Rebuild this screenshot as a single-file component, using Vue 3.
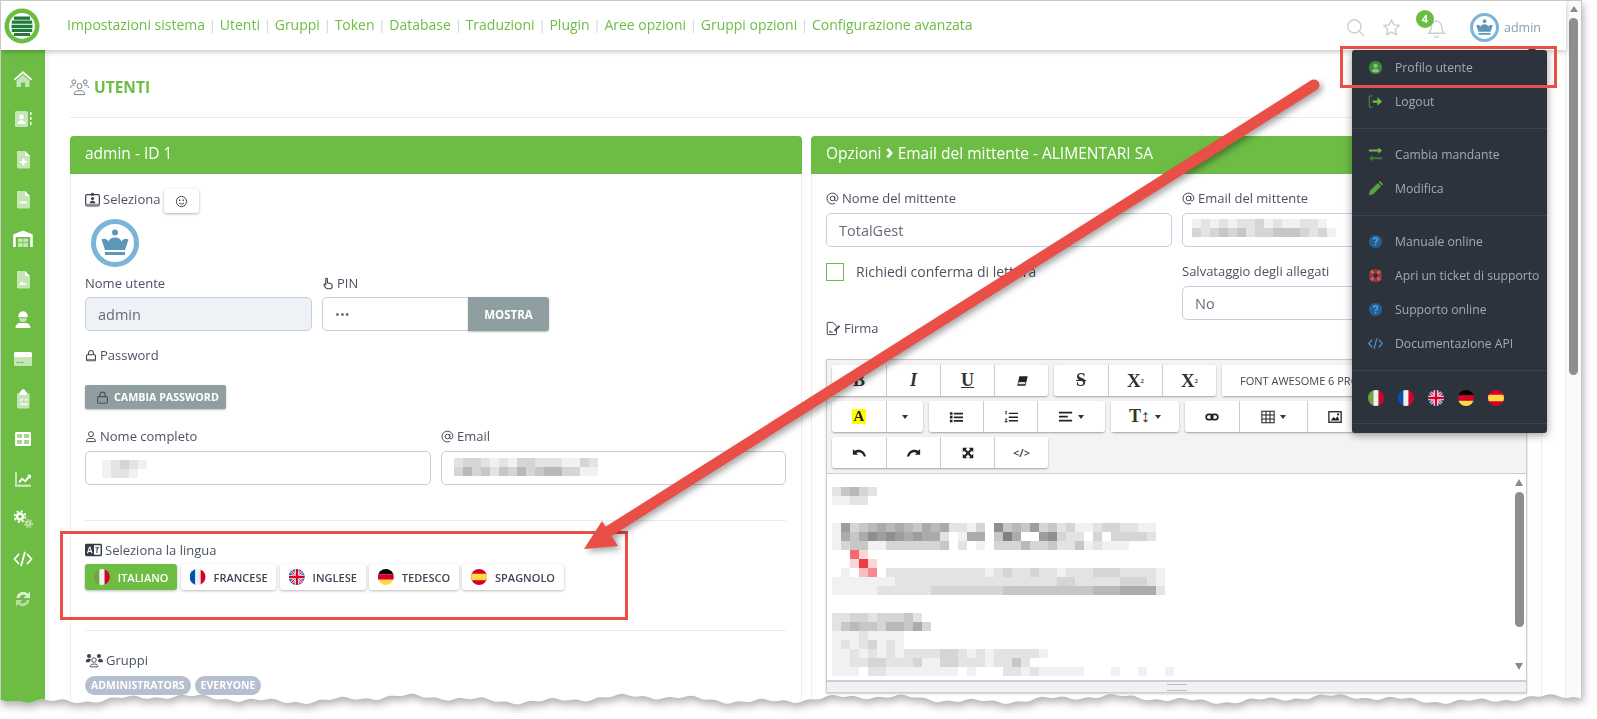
<script setup>
import { computed } from 'vue'

const navLinks = ['Impostazioni sistema', 'Utenti', 'Gruppi', 'Token', 'Database', 'Traduzioni', 'Plugin', 'Aree opzioni', 'Gruppi opzioni', 'Configurazione avanzata']
const sideIcons = ['s-home', 's-id', 's-plus', 's-minus', 's-ware', 's-fchart', 's-work', 's-card', 's-clip', 's-table', 's-chart', 's-cogs', 's-code', 's-sync']
const langs = [
  { name: 'ITALIANO', flag: 'f-it', active: true },
  { name: 'FRANCESE', flag: 'f-fr' },
  { name: 'INGLESE', flag: 'f-uk' },
  { name: 'TEDESCO', flag: 'f-de' },
  { name: 'SPAGNOLO', flag: 'f-es' }
]
const flags = ['f-it', 'f-fr', 'f-uk', 'f-de', 'f-es']

const special = { r: '#f46a70', s: '#fbd5d8', t: '#ee3b43', u: '#fbbcbe', v: '#f88a8f' }
function cells(str) {
  return [...str].map((c) => {
    if (c === '.') return 'transparent'
    if (special[c]) return special[c]
    const g = 255 - parseInt(c, 16) * 14
    return `rgb(${g},${g},${g})`
  })
}
const mosaic = (rows) => rows.map(cells)

const mNome = mosaic(['012321', '012210'])
const mMail = mosaic(['2332121332221132', '3534243534553311'])
const mSender = mosaic(['1212122312112210', '3234342334443231'])
const eGroups = [
  { gap: 14, rows: mosaic(['24532', '11220']) },
  { gap: 18, rows: mosaic([
    '17345656546562213.8454734231123322110',
    '1646878767662.166.4960.78322.3.33332.',
    '1344113333334.2.1.33353342241211100.',
    '..rs',
    '..sts',
    '.1.uv.2222222222212322322122233322221',
    '1111111222222222222222222332222233321',
    '1111122222233333333444444444455566662'
  ]) },
  { gap: 18, rows: mosaic([
    '22332333420',
    '24544355463',
    '111211110',
    '121231210',
    '112121212222332121222221',
    '1122332223113322212242',
    '111.2211111111.1...221211111...1..1..1..'
  ]) }
]

const tornClip = computed(() => {
  const pts = ['0 0', '100% 0', '100% 698px']
  for (let x = 1582; x > 0; x -= 4) {
    const y = 699 + 2.6 * Math.sin(x / 37) + 1.8 * Math.sin(x / 11.3) + 1.1 * Math.sin(x / 3.7)
    pts.push(`${x}px ${y.toFixed(1)}px`)
  }
  pts.push('0 700px')
  return `polygon(${pts.join(',')})`
})
</script>

<template>
  <div class="shot">
    <svg class="defs" aria-hidden="true">
      <symbol id="s-home" viewBox="0 0 20 20"><path fill="#fff" d="M10 2 .8 10.2 2 11.6l8-7 8 7 1.2-1.4z"/><path fill="#fff" opacity=".6" d="M3.5 11.5 10 5.8l6.5 5.7V18H12v-4.5H8V18H3.5z"/></symbol>
      <symbol id="s-id" viewBox="0 0 20 20"><rect x="2" y="2" width="13" height="16" rx="1.5" fill="#fff" opacity=".6"/><circle cx="8.5" cy="8" r="2.4" fill="#fff"/><path fill="#fff" d="M4.500 15c0-2.500 2-3.800 4-3.800s4 1.300 4 3.800z"/><path fill="#fff" d="M17 3h1.500v3H17zm0 5h1.500v3H17zm0 5h1.500v3H17z"/></symbol>
      <symbol id="s-plus" viewBox="0 0 20 20"><path fill="#fff" opacity=".6" d="M4 2h8l5 5v11a1.500 1.500 0 0 1-1.500 1.500h-10A1.500 1.500 0 0 1 4 18z"/><path fill="#fff" d="m12 2 5 5h-5zM9.500 9.500h2V12H14v2h-2.500v2.500h-2V14H7v-2h2.500z"/></symbol>
      <symbol id="s-minus" viewBox="0 0 20 20"><path fill="#fff" opacity=".6" d="M4 2h8l5 5v11a1.500 1.500 0 0 1-1.500 1.500h-10A1.500 1.500 0 0 1 4 18z"/><path fill="#fff" d="m12 2 5 5h-5zM7 12.500h7v2H7z"/></symbol>
      <symbol id="s-ware" viewBox="0 0 20 20"><path fill="#fff" d="M10 1.500 19.800 5.500v12.500h-2.600V8H2.800v10H.2V5.500z"/><path fill="#fff" opacity=".6" d="M5 9.500h4.700v3.800H5zm5.300 0H15v3.800h-4.700zM5 14h4.700v4H5zm5.300 0H15v4h-4.700z"/></symbol>
      <symbol id="s-fchart" viewBox="0 0 20 20"><path fill="#fff" opacity=".6" d="M4 2h8l5 5v11a1.500 1.500 0 0 1-1.500 1.500h-10A1.500 1.500 0 0 1 4 18z"/><path fill="#fff" d="m12 2 5 5h-5zM6 16l2.500-4 2 2.500 1-1 2.500 2.500z"/></symbol>
      <symbol id="s-work" viewBox="0 0 20 20"><path fill="#fff" d="M5.300 7a4.700 4.700 0 0 1 9.400 0v1.200H5.300zM2.500 19c0-3.500 2.500-5 4.500-5h6c2 0 4.500 1.500 4.500 5z"/><path fill="#fff" opacity=".6" d="M6.200 9.200h7.600a3.800 3.800 0 0 1-7.600 0z"/></symbol>
      <symbol id="s-card" viewBox="0 0 20 20"><path fill="#fff" d="M1 4.500A1.500 1.500 0 0 1 2.500 3h15A1.500 1.500 0 0 1 19 4.500V8H1z"/><path fill="#fff" opacity=".6" d="M1 8h18v7.500a1.500 1.500 0 0 1-1.500 1.500h-15A1.500 1.500 0 0 1 1 15.500z"/><path fill="#6dbd45" d="M3.500 13h3v1h-3zm4 0h3v1h-3z"/></symbol>
      <symbol id="s-clip" viewBox="0 0 20 20"><rect x="4" y="4" width="12.500" height="15.500" rx="1.500" fill="#fff" opacity=".6"/><path fill="#fff" d="M8 2.500a2.200 2.200 0 0 1 4.400 0h1.300v3.500H6.700V2.500zM7 10l1 1 1.800-1.800.7.700L8 12.400 6.300 10.700zm5 .2h3v1.200h-3zM7 14.500h8v1.200H7z"/></symbol>
      <symbol id="s-table" viewBox="0 0 20 20"><rect x="2" y="3" width="16" height="14" rx="1.500" fill="#fff"/><path fill="#6dbd45" d="M4 5h5v4H4zm7 0h5v4h-5zM4 11h5v4H4zm7 0h5v4h-5z" opacity=".6"/></symbol>
      <symbol id="s-chart" viewBox="0 0 20 20"><path fill="#fff" opacity=".6" d="M2 3h2v12.500h14V18H2z"/><path fill="#fff" d="M5.500 12.500 9 8.500l3 2.500 3.300-4-1.500-1.200H18V10l-1.300-1.500-4.300 5-3-2.500-2.800 3.200z"/></symbol>
      <symbol id="s-cogs" viewBox="0 0 20 20"><g fill="none" stroke="#fff"><circle cx="7" cy="7.500" r="3" stroke-width="2.600"/><circle cx="7" cy="7.500" r="5.400" stroke-width="1.800" stroke-dasharray="2.100 2.150"/></g><g fill="none" stroke="#fff" opacity=".55"><circle cx="15.500" cy="14.500" r="2" stroke-width="2"/><circle cx="15.500" cy="14.500" r="3.800" stroke-width="1.500" stroke-dasharray="1.600 1.600"/></g></symbol>
      <symbol id="s-code" viewBox="0 0 20 20"><path fill="none" stroke="#fff" stroke-width="1.800" stroke-linecap="round" stroke-linejoin="round" d="M5.500 5.500 1.500 10l4 4.500M14.500 5.500l4 4.500-4 4.500M11.800 3.500 8.200 16.500"/></symbol>
      <symbol id="s-sync" viewBox="0 0 20 20"><path fill="#fff" opacity=".75" d="M3.500 9A6.800 6.800 0 0 1 15 4.700L17 2.500V9h-6.500l2.400-2.200A4 4 0 0 0 6.300 9z"/><path fill="#fff" opacity=".5" d="M16.500 11A6.800 6.800 0 0 1 5 15.300L3 17.500V11h6.500l-2.400 2.200a4 4 0 0 0 6.600-2.200z"/></symbol>

      <symbol id="crown" viewBox="0 0 48 48"><circle cx="24" cy="24" r="21.500" fill="#fff" stroke="#7ab4d9" stroke-width="5"/><circle cx="24" cy="13.500" r="3" fill="#5d97b8"/><path fill="#5d97b8" d="M10.500 20.500c3-1.500 5.500-.5 7 2 1-2.500 3-4 6.500-4s5.500 1.500 6.500 4c1.500-2.500 4-3.500 7-2L34 31H14z"/><rect x="14" y="33" width="20" height="3" fill="#5d97b8"/></symbol>
      <symbol id="people" viewBox="0 0 20 18" fill="none" stroke="currentColor" stroke-width="1"><circle cx="10" cy="8" r="2.700"/><path d="M4.500 17v-.800c0-2 2-3.200 3.500-3.200h4c1.500 0 3.500 1.200 3.500 3.200v.800z"/><circle cx="4" cy="3.500" r="2"/><circle cx="16" cy="3.500" r="2"/><path d="M.6 10c0-2 1.400-3 2.400-3h2M19.400 10c0-2-1.400-3-2.400-3h-2"/></symbol>
      <symbol id="badge" viewBox="0 0 16 16"><rect x=".7" y="2.700" width="14.600" height="12" rx="1.500" fill="none" stroke="currentColor" stroke-width="1.300"/><path fill="#8d8d8d" d="M.7 12.500h14.600v2.200H.7z"/><rect x="6.500" y="1" width="3" height="3" fill="currentColor"/><circle cx="8" cy="7" r="1.700" fill="currentColor"/><path fill="currentColor" d="M5 12c0-2 1.400-2.800 3-2.800s3 .8 3 2.800z"/></symbol>
      <symbol id="smile" viewBox="0 0 16 16" fill="none" stroke="currentColor" stroke-width="1.200"><circle cx="8" cy="8" r="6.300"/><path d="M5 9.800c1.500 1.700 4.500 1.700 6 0"/><path fill="currentColor" stroke="none" d="M5 5.500h1.600v2H5zm4.400 0H11v2H9.400z"/></symbol>
      <symbol id="hand" viewBox="0 0 16 16"><path fill="none" stroke="currentColor" stroke-width="1.500" d="M5 8V2.200a1.100 1.100 0 0 1 2.200 0V7l4 .9c1.500.4 2.300 1.400 2.300 2.800v1.300a3 3 0 0 1-3 3H7.500c-1 0-1.800-.5-2.400-1.300L2.700 10.700c-.8-1.300.9-2.600 2.300-1.200z"/><path fill="#e0a040" d="M5.400 2h1.400v1.800H5.400z"/></symbol>
      <symbol id="lock" viewBox="0 0 16 16" fill="none" stroke="currentColor" stroke-width="1.400"><rect x="2" y="7" width="12" height="8" rx="1.300"/><path d="M4.800 7V4.500a3.200 3.200 0 0 1 6.400 0V7"/><path fill="#8d8d8d" stroke="none" d="M2.500 12.500h11v2h-11z"/></symbol>
      <symbol id="user" viewBox="0 0 16 16" fill="none" stroke="currentColor" stroke-width="1.300"><circle cx="8" cy="4.800" r="3.300"/><path d="M2.200 14.800v-1c0-2 1.600-3.300 3.300-3.300h5c1.700 0 3.300 1.300 3.300 3.300v1z"/></symbol>
      <symbol id="at" viewBox="0 0 16 16" fill="none" stroke="currentColor" stroke-width="1.200"><circle cx="8" cy="8" r="2.800"/><path d="M10.800 5.200V9.500c0 2.200 3.800 2.200 3.800-1.500A6.700 6.700 0 1 0 11 14"/></symbol>
      <symbol id="lang" viewBox="0 0 18 14"><rect width="18" height="13" y=".5" rx="1.500" fill="#333b47"/><rect x="9.500" y="2" width="7" height="10" fill="#fff"/><path fill="#fff" d="m2 10.500 2.300-7h1.400l2.300 7H6.700l-.4-1.400H3.700l-.4 1.400zm2-2.600h2L5 4.900z"/><path fill="#333b47" d="M11 4h4v1.100h-1.500l-.5 5h-1.100l.5-5H11z"/></symbol>
      <symbol id="groups" viewBox="0 0 20 16"><path fill="currentColor" d="M1 9c0-2 1.200-3 3-3s2.400.7 2.800 1.500C5.700 8 5 9 5 10H1zM15 7.500c.4-.8 1-1.500 2-1.500 1.800 0 3 1 3 3v1h-5c0-1-.3-2-1-2.500z"/><circle cx="4.500" cy="3" r="2.300" fill="currentColor"/><circle cx="15.500" cy="3" r="2.300" fill="currentColor"/><circle cx="10" cy="7.500" r="2.500" fill="none" stroke="currentColor"/><path fill="none" stroke="currentColor" d="M5.800 15v-.5c0-1.500 1.500-2.500 3-2.500h2.400c1.500 0 3 1 3 2.500v.5z"/></symbol>
      <symbol id="sig" viewBox="0 0 18 16"><path fill="none" stroke="currentColor" stroke-width="1.200" d="M12.500 10v4.300a1 1 0 0 1-1 1h-9a1 1 0 0 1-1-1V1.700a1 1 0 0 1 1-1H8l4.500 4v1"/><path fill="currentColor" d="M10 9.500 15.500 4l1.500 1.500L11.500 11H10zM3.500 12.500c1-2 2-3 2.500-1.500s1 1.500 2 .5l.3 1c-1.300 1.200-2.500 1-3-.5-.4.500-.7 1-1 1.300z"/></symbol>

      <symbol id="search" viewBox="0 0 20 20" fill="none" stroke="currentColor" stroke-width="1.500"><circle cx="8.800" cy="8.800" r="7"/><path d="m14 14 5 5"/></symbol>
      <symbol id="star" viewBox="0 0 20 20" fill="none" stroke="currentColor" stroke-width="1.500" stroke-linejoin="round"><path d="m10 1.800 2.500 5.400 5.900.7-4.400 4 1.200 5.800L10 14.800l-5.200 2.900L6 11.900l-4.400-4 5.900-.7z"/></symbol>
      <symbol id="bell" viewBox="0 0 20 20" fill="none" stroke="currentColor" stroke-width="1.500"><path d="M10 1v1.500a5.500 5.500 0 0 0-5.500 5.500c0 4-1 5.500-2.500 7h16c-1.500-1.500-2.500-3-2.500-7A5.500 5.500 0 0 0 10 2.500M8 17.500a2 2 0 0 0 4 0"/></symbol>

      <symbol id="d-user" viewBox="0 0 16 16"><circle cx="8" cy="8" r="7" fill="#3f8a3a"/><circle cx="8" cy="6.200" r="2.300" fill="#8fc478"/><path fill="#8fc478" d="M4 12c.5-2 2-2.800 4-2.800s3.500.8 4 2.800c-2 1.500-6 1.500-8 0z"/></symbol>
      <symbol id="d-out" viewBox="0 0 16 16"><path fill="none" stroke="#3c7d38" stroke-width="1.500" d="M5 2H2.500A1 1 0 0 0 1.500 3v10a1 1 0 0 0 1 1H5"/><path fill="#6dbd45" d="M5 6.800h5V3.500L15 8l-5 4.500V9.200H5z"/></symbol>
      <symbol id="d-swap" viewBox="0 0 16 16"><path fill="#6dbd45" d="M1 3.800h10V1.200L15 5l-4 3.800V6.300H1z" transform="translate(0 -.5) scale(1 .85)"/><path fill="#3c7d38" d="M15 10.300H5V7.700L1 11.500l4 3.800v-2.500h10z" transform="translate(0 1.800) scale(1 .88)"/></symbol>
      <symbol id="d-pen" viewBox="0 0 16 16"><path fill="#57a33a" d="M.8 15.200 2 10.500 10.500 2l3.500 3.500L5.500 14z"/><path fill="#6dbd45" d="m11.500 1 1-1 3.500 3.500-1 1z"/></symbol>
      <symbol id="d-help" viewBox="0 0 16 16"><circle cx="8" cy="8" r="7" fill="#235f90"/><path fill="none" stroke="#5ba2da" stroke-width="1.500" d="M5.800 6.200c0-3 4.400-3 4.400 0 0 1.800-2.200 1.600-2.200 3.400"/><rect x="7.200" y="10.600" width="1.600" height="1.600" fill="#5ba2da"/></symbol>
      <symbol id="d-ring" viewBox="0 0 16 16"><circle cx="8" cy="8" r="7" fill="#8f3a3a"/><path stroke="#d65a52" stroke-width="3" d="m3 3 3 3m7-3-3 3m-7 7 3-3m7 3-3-3"/><circle cx="8" cy="8" r="2.500" fill="#2d333d"/></symbol>
      <symbol id="d-code" viewBox="0 0 18 16"><path fill="none" stroke="#4a8bc4" stroke-width="1.600" d="M5 3.500.9 8 5 12.500M13 3.500 17.100 8 13 12.500M10.700 1.500 7.300 14.500"/></symbol>

      <symbol id="f-it" viewBox="0 0 24 24"><path fill="#6da544" d="M0 0h8v24H0z"/><path fill="#f0f0f0" d="M8 0h8v24H8z"/><path fill="#d80027" d="M16 0h8v24h-8z"/></symbol>
      <symbol id="f-fr" viewBox="0 0 24 24"><path fill="#0052b4" d="M0 0h8v24H0z"/><path fill="#f0f0f0" d="M8 0h8v24H8z"/><path fill="#d80027" d="M16 0h8v24h-8z"/></symbol>
      <symbol id="f-uk" viewBox="0 0 24 24"><path fill="#0052b4" d="M0 0h24v24H0z"/><path stroke="#f0f0f0" stroke-width="4.500" d="m0 0 24 24M24 0 0 24"/><path stroke="#d80027" stroke-width="1.600" d="m0 0 24 24M24 0 0 24"/><path stroke="#f0f0f0" stroke-width="7" d="M12 0v24M0 12h24"/><path stroke="#d80027" stroke-width="3.500" d="M12 0v24M0 12h24"/></symbol>
      <symbol id="f-de" viewBox="0 0 24 24"><path fill="#000" d="M0 0h24v8H0z"/><path fill="#d80027" d="M0 8h24v8H0z"/><path fill="#ffda44" d="M0 16h24v8H0z"/></symbol>
      <symbol id="f-es" viewBox="0 0 24 24"><path fill="#d80027" d="M0 0h24v24H0z"/><path fill="#ffda44" d="M0 7h24v10H0z"/></symbol>

      <symbol id="t-eraser" viewBox="0 0 16 16"><path fill="#222" d="M5 2.500h9.500L12 13.500H2.500z"/><path fill="#fff" d="M4.300 9h7.800l-.6 2.800H3.600z" opacity=".85"/></symbol>
      <symbol id="t-ul" viewBox="0 0 16 16"><path fill="#222" d="M1 2.500h3v3H1zm0 4.200h3v3H1zm0 4.300h3v3H1zM5.500 3H16v2H5.500zm0 4.300H16v2H5.500zm0 4.200H16v2H5.500z"/></symbol>
      <symbol id="t-ol" viewBox="0 0 16 16"><path fill="#222" d="M5.500 3H16v1.700H5.500zm0 4.300H16V9H5.500zm0 4.200H16v1.700H5.500zM1.500 1H3v4H1.800V2.200h-.5zM.8 10.500C.9 9.400 3.700 9.100 3.800 10.700c0 1-1.300 1.300-1.600 2h1.700V14H.7c0-1.800 2-2.300 2-3.100 0-.5-.8-.4-.9.100z"/></symbol>
      <symbol id="t-align" viewBox="0 0 16 16"><path fill="#222" d="M0 2h15v2H0zm0 4.500h10v2H0zM0 11h15v2H0z"/></symbol>
      <symbol id="t-link" viewBox="0 0 18 16" fill="none" stroke="#222" stroke-width="2.200"><rect x="1.500" y="4.500" width="8.500" height="7" rx="3.500"/><rect x="8" y="4.500" width="8.500" height="7" rx="3.500"/></symbol>
      <symbol id="t-table" viewBox="0 0 16 16" fill="none" stroke="#222" stroke-width="1.200"><path d="M1 1.500h14v13H1zM1 5.800h14M1 10.200h14M5.700 1.500v13M10.300 1.500v13"/></symbol>
      <symbol id="t-image" viewBox="0 0 16 16"><rect x="1" y="2" width="14" height="12" fill="none" stroke="#222" stroke-width="1.500"/><path fill="#222" d="m3 12 3.500-4 2 2 2.500-3 2 5z"/><circle cx="11.500" cy="5" r="1.200" fill="#222"/></symbol>
      <symbol id="t-undo" viewBox="0 0 16 16"><path fill="#222" d="M1 3.500v6.500h6L4.900 8c3.500-1.800 7-.5 8.600 4H16C14.800 5.500 8.500 2.500 3 5.500z"/></symbol>
      <symbol id="t-redo" viewBox="0 0 16 16"><path fill="#222" d="M15 3.500v6.500H9l2.100-2C7.600 6.200 4.100 7.500 2.500 12H0C1.200 5.500 7.500 2.500 13 5.500z"/></symbol>
      <symbol id="t-full" viewBox="0 0 16 16"><path fill="#222" d="M1 1h6L5 3l3 3 3-3-2-2h6v6l-2-2-3 3 3 3 2-2v6H9l2-2-3-3-3 3 2 2H1V9l2 2 3-3-3-3-2 2z"/></symbol>
    </svg>

    <div class="frame" :style="{ clipPath: tornClip }">
      <div class="app">
        <header class="topbar">
          <div class="logo">
            <svg width="36" height="36" viewBox="0 0 36 36">
              <circle cx="18" cy="18" r="15.200" fill="#fff" stroke="#6dbd45" stroke-width="4.600"/>
              <path fill="#227a3a" d="M10 8.500h16v3.200H10zM7.800 12.600h20.400v3.200H7.800zM7.500 16.700h21v3.200h-21zM7.800 20.800h20.400V24H7.800zM10 24.900h16v3H10z"/>
            </svg>
          </div>
          <nav class="nav">
            <template v-for="(l, i) in navLinks" :key="l">
              <span v-if="i" class="sep">|</span>
              <a class="navlink">{{ l }}</a>
            </template>
          </nav>
          <div class="tools">
            <svg class="tool tool-search"><use href="#search"/></svg>
            <svg class="tool tool-star"><use href="#star"/></svg>
            <div class="bellwrap">
              <svg class="tool"><use href="#bell"/></svg>
              <span class="count">4</span>
            </div>
            <svg class="topavatar"><use href="#crown"/></svg>
            <span class="me">admin</span>
          </div>
        </header>

        <div class="body">
          <aside class="side">
            <div v-for="s in sideIcons" :key="s" class="sideitem">
              <svg class="sideicon"><use :href="'#' + s"/></svg>
            </div>
          </aside>

          <main class="main">
            <div class="title">
              <svg class="titleicon"><use href="#people"/></svg>
              <h1>UTENTI</h1>
            </div>
            <hr class="pagehr" />

            <div class="cards">
              <section class="card">
                <div class="cardhead">admin - ID 1</div>
                <div class="cardbody left">
                  <div class="selrow">
                    <span class="lbl sellbl"><svg class="ic ic-lg"><use href="#badge"/></svg>Seleziona</span>
                    <button class="smilebtn"><svg class="ic"><use href="#smile"/></svg></button>
                  </div>
                  <svg class="bigavatar"><use href="#crown"/></svg>
                  <div class="tworow userrow">
                    <div class="fld-user">
                      <span class="lbl">Nome utente</span>
                      <div class="input readonly">admin</div>
                    </div>
                    <div class="fld-pin">
                      <span class="lbl"><svg class="ic ic-sm"><use href="#hand"/></svg>PIN</span>
                      <div class="pinrow">
                        <div class="input pin">•••</div>
                        <button class="graybtn mostra">MOSTRA</button>
                      </div>
                    </div>
                  </div>
                  <span class="lbl pw"><svg class="ic ic-sm"><use href="#lock"/></svg>Password</span>
                  <button class="graybtn cambia"><svg class="ic ic-dark"><use href="#lock"/></svg>CAMBIA PASSWORD</button>
                  <div class="namegrid">
                    <div>
                      <span class="lbl"><svg class="ic ic-sm"><use href="#user"/></svg>Nome completo</span>
                      <div class="input blurinput">
                        <div class="mos"><div v-for="(r, i) in mNome" :key="i" class="mrow"><i v-for="(c, j) in r" :key="j" :style="{ background: c }"></i></div></div>
                      </div>
                    </div>
                    <div>
                      <span class="lbl"><svg class="ic"><use href="#at"/></svg>Email</span>
                      <div class="input blurinput">
                        <div class="mos"><div v-for="(r, i) in mMail" :key="i" class="mrow"><i v-for="(c, j) in r" :key="j" :style="{ background: c }"></i></div></div>
                      </div>
                    </div>
                  </div>
                  <hr class="cardhr hr1" />
                  <span class="lbl"><svg class="ic ic-lang"><use href="#lang"/></svg>Seleziona la lingua</span>
                  <div class="langs">
                    <button v-for="l in langs" :key="l.name" class="langbtn" :class="{ active: l.active }">
                      <svg class="flag16"><use :href="'#' + l.flag"/></svg>{{ l.name }}
                    </button>
                  </div>
                  <hr class="cardhr hr2" />
                  <span class="lbl"><svg class="ic ic-groups"><use href="#groups"/></svg>Gruppi</span>
                  <div class="badges"><span class="badge">ADMINISTRATORS</span><span class="badge">EVERYONE</span></div>
                </div>
              </section>

              <section class="card">
                <div class="cardhead">Opzioni <b class="chev">›</b> Email del mittente - ALIMENTARI SA</div>
                <div class="cardbody right">
                  <div class="formgrid">
                    <div>
                      <span class="lbl"><svg class="ic"><use href="#at"/></svg>Nome del mittente</span>
                      <div class="input">TotalGest</div>
                    </div>
                    <div>
                      <span class="lbl"><svg class="ic"><use href="#at"/></svg>Email del mittente</span>
                      <div class="input blurinput sender">
                        <div class="mos"><div v-for="(r, i) in mSender" :key="i" class="mrow"><i v-for="(c, j) in r" :key="j" :style="{ background: c }"></i></div></div>
                      </div>
                    </div>
                    <label class="check"><span class="box"></span>Richiedi conferma di lettura</label>
                    <div>
                      <span class="lbl">Salvataggio degli allegati</span>
                      <div class="input">No</div>
                    </div>
                  </div>
                  <span class="lbl firma"><svg class="ic ic-lg"><use href="#sig"/></svg>Firma</span>

                  <div class="editor">
                    <div class="toolbar">
                      <div class="tbrow">
                        <div class="grp">
                          <button class="tb serif bold">B</button>
                          <button class="tb serif bold italic">I</button>
                          <button class="tb serif bold under">U</button>
                          <button class="tb"><svg class="tbi"><use href="#t-eraser"/></svg></button>
                        </div>
                        <div class="grp">
                          <button class="tb serif bold strike">S</button>
                          <button class="tb serif bold sc">X<sup>2</sup></button>
                          <button class="tb serif bold sc">X<sub>2</sub></button>
                        </div>
                        <div class="grp"><button class="tb fontbtn">FONT AWESOME 6 PRO</button></div>
                      </div>
                      <div class="tbrow">
                        <div class="grp">
                          <button class="tb"><span class="hilite">A</span></button>
                          <button class="tb caretonly"><i class="caret"></i></button>
                        </div>
                        <div class="grp">
                          <button class="tb"><svg class="tbi"><use href="#t-ul"/></svg></button>
                          <button class="tb"><svg class="tbi"><use href="#t-ol"/></svg></button>
                          <button class="tb wide"><svg class="tbi"><use href="#t-align"/></svg><i class="caret"></i></button>
                        </div>
                        <div class="grp">
                          <button class="tb wide serif bold">T↕<i class="caret"></i></button>
                        </div>
                        <div class="grp">
                          <button class="tb"><svg class="tbi"><use href="#t-link"/></svg></button>
                          <button class="tb wide"><svg class="tbi"><use href="#t-table"/></svg><i class="caret"></i></button>
                          <button class="tb"><svg class="tbi"><use href="#t-image"/></svg></button>
                        </div>
                      </div>
                      <div class="tbrow">
                        <div class="grp">
                          <button class="tb"><svg class="tbi"><use href="#t-undo"/></svg></button>
                          <button class="tb"><svg class="tbi"><use href="#t-redo"/></svg></button>
                          <button class="tb"><svg class="tbi tbi-sm"><use href="#t-full"/></svg></button>
                          <button class="tb codebtn">&lt;/&gt;</button>
                        </div>
                      </div>
                    </div>
                    <div class="edit">
                      <div class="editcontent">
                        <div v-for="(g, gi) in eGroups" :key="gi" class="mos" :style="{ marginTop: g.gap + 'px' }">
                          <div v-for="(r, i) in g.rows" :key="i" class="mrow"><i v-for="(c, j) in r" :key="j" :style="{ background: c }"></i></div>
                        </div>
                      </div>
                      <div class="miniscroll">
                        <i class="arrow-up"></i>
                        <i class="thumb"></i>
                        <i class="arrow-down"></i>
                      </div>
                    </div>
                    <div class="status"><i class="grip"></i></div>
                  </div>
                </div>
              </section>
            </div>
          </main>
        </div>
      </div>

      <div class="vscroll">
        <i class="up"></i>
        <i class="vthumb"></i>
      </div>

      <div class="menu">
        <i class="menutip"></i>
        <div class="menusec sec1">
          <a class="mi"><svg class="mic"><use href="#d-user"/></svg>Profilo utente</a>
          <a class="mi"><svg class="mic"><use href="#d-out"/></svg>Logout</a>
        </div>
        <div class="menusec">
          <a class="mi"><svg class="mic"><use href="#d-swap"/></svg>Cambia mandante</a>
          <a class="mi"><svg class="mic"><use href="#d-pen"/></svg>Modifica</a>
        </div>
        <div class="menusec">
          <a class="mi"><svg class="mic"><use href="#d-help"/></svg>Manuale online</a>
          <a class="mi"><svg class="mic"><use href="#d-ring"/></svg>Apri un ticket di supporto</a>
          <a class="mi"><svg class="mic"><use href="#d-help"/></svg>Supporto online</a>
          <a class="mi"><svg class="mic"><use href="#d-code"/></svg>Documentazione API</a>
        </div>
        <div class="menuflags">
          <svg v-for="f in flags" :key="f" class="flag16"><use :href="'#' + f"/></svg>
        </div>
      </div>

      <i class="redbox box-top"></i>
      <i class="redbox box-lang"></i>
      <svg class="bigarrow" width="1582" height="719" viewBox="0 0 1582 719">
        <g class="arrowshape">
          <path d="M1314 85 606 533" stroke="#e94f47" stroke-width="11" stroke-linecap="round" fill="none"/>
          <path d="M584 549 602 521 618 546z" fill="#e94f47"/>
        </g>
      </svg>
    </div>
  </div>
</template>

<style>
html, body { margin: 0; padding: 0; background: #fff; overflow: hidden; }
</style>

<style scoped>
.shot {
  width: 1597px;
  height: 719px;
  overflow: hidden;
  font-family: "Open Sans", "Liberation Sans", sans-serif;
  color: #4a5361;
  filter: drop-shadow(1px 4px 4px rgba(0, 0, 0, .32));
}
.defs { position: absolute; width: 0; height: 0; overflow: hidden; }
.frame {
  position: relative;
  box-sizing: border-box;
  width: 1582px;
  height: 719px;
  display: flex;
  background: #fff;
  border: 1px solid #c9c9c9;
  border-bottom: 0;
  overflow: hidden;
}
.app { width: 1565px; display: flex; flex-direction: column; flex: none; }

.topbar {
  position: relative;
  z-index: 2;
  height: 49px;
  flex: none;
  display: flex;
  align-items: center;
  background: #fff;
  box-shadow: 0 2px 5px rgba(0, 0, 0, .22);
}
.logo { width: 44px; height: 36px; margin-left: 3px; margin-top: 1px; flex: none; }
.nav { display: flex; align-items: center; margin-left: 19px; padding-bottom: 2px; font-size: 14px; color: #6dbd45; white-space: nowrap; }
.navlink { color: #6dbd45; }
.sep { color: #c9d2dc; margin: 0 3.800px; font-size: 13px; }
.tools { margin-left: auto; display: flex; align-items: center; height: 100%; }
.tool { width: 19px; height: 19px; color: #c8d0d6; display: block; }
.tool-star { margin-left: 17px; }
.tool-search { margin-top: 3px; }
.tool-star { margin-top: 3px; }
.bellwrap { position: relative; margin-left: 26px; margin-top: 5px; }
.count {
  position: absolute;
  left: -11px;
  top: -9px;
  width: 18px;
  height: 18px;
  border-radius: 50%;
  background: #6dbd45;
  color: #fff;
  font-size: 11px;
  font-weight: 700;
  line-height: 18px;
  text-align: center;
}
.topavatar { width: 29px; height: 29px; margin-left: 24px; margin-top: 3px; display: block; }
.me { font-size: 12.5px; color: #8a9cb3; margin-left: 5px; margin-right: 25px; margin-top: 3px; }

.body { flex: 1; display: flex; min-height: 0; }
.side {
  width: 44px;
  flex: none;
  box-sizing: border-box;
  padding-top: 9px;
  background: #6dbd45;
  box-shadow: 3px 0 5px rgba(0, 0, 0, .05);
}
.sideitem { height: 40px; display: flex; align-items: center; justify-content: center; }
.sideicon { width: 20px; height: 20px; display: block; }

.main { flex: 1; box-sizing: border-box; padding: 20px 22px 0 25px; overflow: hidden; border-right: 1px solid #ececec; }
.title { display: flex; align-items: center; height: 34px; gap: 5px; }
.titleicon { width: 19px; height: 18px; color: #727a85; }
.title h1 { margin: 0; font-size: 15.5px; font-weight: 700; color: #6dbd45; line-height: 34px; }
.pagehr { border: 0; border-top: 1px solid #e9ecef; margin: 13px 0 18px; }

.cards { display: grid; grid-template-columns: 732px 731px; gap: 9px; }
.card { border: 1px solid #eeeeee; border-top: 0; border-radius: 4px 4px 0 0; min-height: 620px; box-sizing: border-box; }
.cardhead {
  height: 38px;
  margin: 0 -1px;
  padding-left: 15px;
  background: #6dbd45;
  color: #fff;
  font-size: 15.5px;
  line-height: 35px;
  border-radius: 4px 4px 0 0;
}
.chev { font-weight: 700; font-size: 22px; line-height: 20px; }
.cardbody { padding: 15px 15px 0 14px; }
.cardbody.right { padding-top: 16px; }

.lbl { display: flex; align-items: center; gap: 3px; height: 16px; font-size: 13px; color: #4a5361; white-space: nowrap; }
.ic { width: 13px; height: 13px; color: #3c4350; flex: none; display: block; }
.ic-sm { width: 12px; height: 13px; }
.ic-lg { width: 15px; height: 15px; }
.ic-dark { color: #49525c; }
.ic-lang { width: 17px; height: 14px; }
.ic-groups { width: 18px; height: 15px; }

.selrow { display: flex; align-items: flex-start; height: 24px; gap: 4px; }
.sellbl { margin-top: 2px; }
.smilebtn {
  width: 35px;
  height: 24px;
  border: 0;
  padding: 0;
  background: #fff;
  border-radius: 3px;
  box-shadow: 0 1px 3px rgba(0, 0, 0, .3);
  display: flex;
  align-items: center;
  justify-content: center;
}
.bigavatar { display: block; width: 48px; height: 48px; margin: 6px 0 0 6px; }
.tworow { display: flex; gap: 10px; }
.userrow { margin-top: 8px; }
.fld-user { width: 227px; }
.fld-pin { flex: 1; }
.input {
  box-sizing: border-box;
  height: 34px;
  margin-top: 6px;
  border: 1px solid #c7cfdf;
  border-radius: 5px;
  background: #fff;
  font-size: 14.5px;
  line-height: 33px;
  padding-left: 12px;
  color: #656d78;
}
.input.readonly { background: #eef1f6; }
.pinrow { display: flex; }
.input.pin { width: 146px; border-radius: 5px 0 0 5px; border-right: 0; font-size: 13px; line-height: 32px; }
.graybtn {
  border: 0;
  background: #8f9fa1;
  color: #fff;
  font-family: inherit;
  font-weight: 700;
  font-size: 10.7px;
  box-shadow: 0 1px 2px rgba(0, 0, 0, .25);
}
.mostra { width: 81px; height: 34px; margin-top: 6px; border-radius: 0 3px 3px 0; font-size: 11.5px; }
.pw { margin-top: 16px; }
.cambia {
  margin-top: 22px;
  width: 141px;
  height: 24px;
  border-radius: 2px;
  display: flex;
  align-items: center;
  gap: 5px;
  padding: 0 0 0 11px;
}
.namegrid { display: grid; grid-template-columns: 346px 345px; gap: 10px; margin-top: 19px; }
.namegrid .input { margin-top: 7px; }
.blurinput { padding: 8px 0 0 7px; overflow: hidden; }
.namegrid > div:nth-child(2) .blurinput { padding-left: 12px; padding-top: 6px; }
.sender { padding: 5px 0 0 9px; }
.mos { display: block; }
.mrow { display: flex; height: 9px; }
.mrow i { width: 9px; height: 9px; flex: none; display: block; }
.cardhr { border: 0; border-top: 1px solid #e9ecef; margin: 0; }
.hr1 { margin: 35px 0 21px; }
.hr2 { margin: 40px 0 21px; }
.langs { display: flex; gap: 3.400px; margin-top: 6px; }
.langbtn {
  height: 26px;
  border: 0;
  background: #fff;
  border-radius: 3px;
  padding: 0 8.800px;
  display: flex;
  align-items: center;
  gap: 8px;
  font-family: inherit;
  font-size: 11px;
  font-weight: 600;
  color: #3f4753;
  box-shadow: 0 1px 3px rgba(0, 0, 0, .28);
}
.langbtn.active { background: #6dbd45; color: #fff; }
.flag16 { width: 16px; height: 16px; clip-path: circle(50%); flex: none; display: block; }
.badges { display: flex; gap: 4px; margin-top: 8px; }
.badge {
  height: 19px;
  padding: 0 6px;
  border-radius: 10px;
  background: #b5bfcf;
  color: #fff;
  font-size: 10.5px;
  font-weight: 700;
  line-height: 19px;
}

.formgrid { display: grid; grid-template-columns: 346px 345px; column-gap: 10px; }
.formgrid .input { margin-top: 7px; }
.check { display: flex; align-items: flex-start; font-size: 14px; margin-top: 16px; height: 56px; color: #4a5361; line-height: 18px; }
.box { width: 18px; height: 18px; box-sizing: border-box; border: 1px solid #6dbd45; margin-right: 12px; flex: none; }
.formgrid > div:nth-child(4) { margin-top: 16px; }
.firma { margin-top: 0; }
.editor {
  width: 701px;
  box-sizing: border-box;
  height: 334px;
  margin-top: 23px;
  border: 1px solid #c9cdd3;
  border-top-color: #c9c9c9;
  display: flex;
  flex-direction: column;
  box-shadow: 0 1px 2px rgba(0, 0, 0, .2);
}
.toolbar {
  height: 114px;
  flex: none;
  box-sizing: border-box;
  padding: 5px 5px 0;
  background: #f3f3f3;
  border-bottom: 1px solid #c7cfdf;
  overflow: hidden;
}
.tbrow { display: flex; gap: 6px; height: 31px; margin-bottom: 5px; }
.grp { display: flex; box-shadow: 0 1px 2px rgba(0, 0, 0, .35); border-radius: 3px; flex: none; height: 31px; }
.tb {
  width: 54px;
  height: 31px;
  box-sizing: border-box;
  border: 0;
  border-left: 1px solid #ccc;
  background: #fff;
  padding: 0;
  display: flex;
  align-items: center;
  justify-content: center;
  gap: 5px;
  color: #333;
  font-family: inherit;
  font-size: 14px;
}
.tb:first-child { border-left: 0; border-radius: 3px 0 0 3px; }
.tb:last-child { border-radius: 0 3px 3px 0; }
.tb.wide { width: 68px; }
.tb.caretonly { width: 37px; }
.serif { font-family: "Liberation Serif", serif; font-size: 18px; }
.bold { font-weight: 700; }
.italic { font-style: italic; }
.under { text-decoration: underline; }
.strike { text-decoration: line-through; }
.sc { gap: 0; font-size: 19px; }
.tb sup, .tb sub { font-size: 7px; }
.tb.fontbtn { width: 160px; font-size: 11px; color: #3f4753; font-family: inherit; justify-content: flex-start; padding-left: 18px; white-space: nowrap; }
.codebtn { font-size: 11px; font-weight: 600; }
.hilite { background: #ff0; font-family: "Liberation Serif", serif; font-weight: 700; font-size: 15px; padding: 0 2px; line-height: 15px; color: #222; }
.tbi { width: 14px; height: 14px; display: block; }
.tbi-sm { width: 12px; height: 12px; }
.caret { width: 0; height: 0; border-left: 3px solid transparent; border-right: 3px solid transparent; border-top: 4px solid #333; display: block; }
.edit { flex: 1; display: flex; min-height: 0; background: #fff; border-bottom: 2px solid #c7cfdf; overflow: hidden; }
.editcontent { flex: 1; padding-left: 5px; overflow: hidden; }
.editcontent .mos:first-child { margin-top: 13px !important; }
.miniscroll { width: 14px; flex: none; display: flex; flex-direction: column; align-items: center; padding-top: 5px; box-sizing: border-box; }
.arrow-up { width: 0; height: 0; border-left: 4.500px solid transparent; border-right: 4.500px solid transparent; border-bottom: 7px solid #8a8a8a; display: block; }
.arrow-down { width: 0; height: 0; border-left: 4.500px solid transparent; border-right: 4.500px solid transparent; border-top: 7px solid #8a8a8a; display: block; margin-top: 36px; }
.thumb { width: 9px; height: 135px; border-radius: 5px; background: #8e8e8e; margin-top: 6px; display: block; }
.status { height: 10px; flex: none; background: #f1f1f1; display: flex; align-items: center; justify-content: center; }
.grip { width: 20px; height: 5px; display: block; border-top: 1px solid #bbb; border-bottom: 1px solid #bbb; position: relative; }

.vscroll { width: 15px; flex: none; display: flex; flex-direction: column; align-items: center; padding-top: 5px; box-sizing: border-box; background: #fafafa; }
.vscroll .up { width: 0; height: 0; border-left: 4.500px solid transparent; border-right: 4.500px solid transparent; border-bottom: 6px solid #8a8a8a; display: block; }
.vthumb { width: 9px; height: 357px; margin-top: 6px; background: #8e8e8e; border-radius: 5px; display: block; }

/* dropdown menu, open over the page */
.menu {
  position: absolute;
  left: 1351px;
  top: 49px;
  width: 195px;
  height: 383px;
  box-sizing: border-box;
  background: #2d333d;
  border-radius: 3px;
  box-shadow: 0 2px 8px rgba(0, 0, 0, .4);
  z-index: 3;
}
.menutip { position: absolute; right: 10px; top: -4px; width: 0; height: 0; border-left: 5px solid transparent; border-right: 5px solid transparent; border-bottom: 5px solid #2d333d; display: block; }
.menusec { padding: 8px 0 10px; border-bottom: 1px solid #3c4350; }
.sec1 { padding-top: 0; }
.mi {
  display: flex;
  align-items: center;
  height: 34px;
  padding-left: 16px;
  font-size: 12.2px;
  color: #a4a9b2;
  white-space: nowrap;
}
.mic { width: 15px; height: 15px; margin-right: 12px; flex: none; display: block; }
.menuflags { display: flex; gap: 14px; padding: 19px 0 0 16px; height: 33px; border-bottom: 1px solid #3c4350; }

.redbox { position: absolute; display: block; border: 3px solid #e94f47; box-sizing: border-box; z-index: 4; pointer-events: none; }
.box-top { left: 1339px; top: 45px; width: 217px; height: 42px; }
.box-lang { left: 59px; top: 530px; width: 568px; height: 89px; }
.bigarrow { position: absolute; left: -1px; top: -1px; z-index: 5; pointer-events: none; }
.arrowshape { filter: drop-shadow(3px 3px 3px rgba(0, 0, 0, .35)); }
</style>
